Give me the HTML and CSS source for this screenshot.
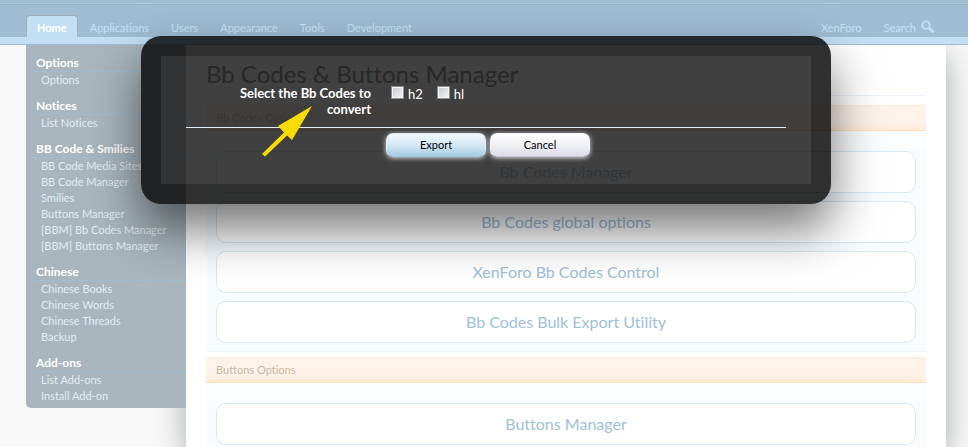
FILE: index.html
```html
<!DOCTYPE html>
<html lang="en">
<head>
<meta charset="utf-8">
<title>Bb Codes &amp; Buttons Manager</title>
<link rel="stylesheet" href="styles.css">
</head>
<body>
<div class="page">
  <header class="header">
    <nav class="tabs">
      <a class="tab active" href="#">Home</a>
      <a class="tab" href="#">Applications</a>
      <a class="tab" href="#">Users</a>
      <a class="tab" href="#">Appearance</a>
      <a class="tab" href="#">Tools</a>
      <a class="tab" href="#">Development</a>
      <a class="tab push" href="#">XenForo</a>
      <a class="tab search" href="#">Search
        <svg width="14" height="14" viewBox="0 0 14 14" aria-hidden="true"><circle cx="5" cy="5" r="3.7" fill="none" stroke="currentColor" stroke-width="1.7"/><path d="M8 8l4.500 4.300" stroke="currentColor" stroke-width="2.500" fill="none"/></svg>
      </a>
    </nav>
  </header>
  <div class="body">
    <aside class="sidebar">
      <section class="group">
        <h2>Options</h2>
        <ul><li><a href="#">Options</a></li></ul>
      </section>
      <section class="group">
        <h2>Notices</h2>
        <ul><li><a href="#">List Notices</a></li></ul>
      </section>
      <section class="group">
        <h2>BB Code &amp; Smilies</h2>
        <ul>
          <li><a href="#">BB Code Media Sites</a></li>
          <li><a href="#">BB Code Manager</a></li>
          <li><a href="#">Smilies</a></li>
          <li><a href="#">Buttons Manager</a></li>
          <li><a href="#">[BBM] Bb Codes Manager</a></li>
          <li><a href="#">[BBM] Buttons Manager</a></li>
        </ul>
      </section>
      <section class="group">
        <h2>Chinese</h2>
        <ul>
          <li><a href="#">Chinese Books</a></li>
          <li><a href="#">Chinese Words</a></li>
          <li><a href="#">Chinese Threads</a></li>
          <li><a href="#">Backup</a></li>
        </ul>
      </section>
      <section class="group">
        <h2>Add-ons</h2>
        <ul>
          <li><a href="#">List Add-ons</a></li>
          <li><a href="#">Install Add-on</a></li>
        </ul>
      </section>
    </aside>
    <main class="content">
      <h1>Bb Codes &amp; Buttons Manager</h1>
      <section class="panel">
        <h2>Bb Codes Options</h2>
        <div class="links">
          <a href="#">Bb Codes Manager</a>
          <a href="#">Bb Codes global options</a>
          <a href="#">XenForo Bb Codes Control</a>
          <a href="#">Bb Codes Bulk Export Utility</a>
        </div>
      </section>
      <section class="panel">
        <h2>Buttons Options</h2>
        <div class="links">
          <a href="#">Buttons Manager</a>
        </div>
      </section>
    </main>
  </div>
  <form class="overlay" role="dialog" aria-labelledby="convert">
    <div class="dialog">
      <div class="row">
        <div class="caption" id="convert">Select the Bb Codes to convert</div>
        <div class="choices">
          <label><input type="checkbox"> h2</label>
          <label><input type="checkbox"> hl</label>
        </div>
      </div>
      <div class="actions">
        <button type="button" class="primary">Export</button>
        <button type="button">Cancel</button>
      </div>
    </div>
  </form>
  <svg class="arrow" width="52" height="52" viewBox="0 0 52 52" aria-hidden="true"><path d="M51 1L17 21L23 27.500L1 49L4 51.500L26 30.500L31 35Z" fill="#f8dc00"/></svg>
</div>
</body>
</html>
```
FILE: styles.css
```css
* { box-sizing: border-box; }
body {
  margin: 0;
  font-family: "Trebuchet MS", Lato, sans-serif;
  font-size: 11px;
  font-variant-ligatures: none;
  background: #f9f9f9;
}
h1, h2, ul { margin: 0; padding: 0; font-weight: normal; }
ul { list-style: none; }
a { color: inherit; text-decoration: none; }

.page {
  position: relative;
  display: flex;
  flex-direction: column;
  min-height: 100vh;
  overflow: hidden;
}

.header {
  position: relative;
  z-index: 2;
  padding: 12px 22px 0 26px;
  background: linear-gradient(#a0bdd4 3px, #a3cdec 3px, #a3cdec 4px, #a4b0b8 4px, #a4b0b8 5px, #a0bdd4 5px);
  border-bottom: 1px solid #9fbdd2;
}
.tabs {
  display: flex;
  align-items: flex-end;
  height: 25px;
}
.header::after {
  content: "";
  display: block;
  height: 7px;
  margin: 0 -22px 0 -26px;
  background: #c2dff4;
}
.tab {
  height: 22px;
  padding: 0 11px;
  line-height: 26px;
  color: #c5e2f7;
}
.tab.active {
  margin-right: 1px;
  padding: 0 10px;
  border: 1px solid #9cacb8;
  border-bottom: 0;
  border-radius: 4px 4px 0 0;
  background: #c2dff4;
  color: #fff;
  font-weight: bold;
  line-height: 24px;
}
.push { margin-left: auto; }
.search { display: flex; gap: 5px; }
.search svg { margin-top: 5px; }

.body {
  flex: 1;
  display: flex;
  align-items: flex-start;
  padding: 0 22px 0 26px;
}
.sidebar {
  position: relative;
  z-index: 1;
  flex: 0 0 160px;
  padding: 9px 0 4px 5px;
  border-bottom-left-radius: 5px;
  background: #a9b6be;
}
.group + .group { margin-top: 9px; }
.group h2 {
  padding-left: 5px;
  border-bottom: 1px solid #9fbdd2;
  color: #fff;
  font-size: 12px;
  font-weight: bold;
  line-height: 17px;
}
.group li {
  padding-left: 10px;
  color: #e3ecf2;
  line-height: 16px;
  white-space: nowrap;
}

.content {
  flex: 1;
  align-self: stretch;
  padding: 14px 20px 0;
  background: #fff;
  box-shadow: 0 10px 30px rgba(0, 20, 40, .35);
}
.content h1 {
  height: 37px;
  margin-bottom: 9px;
  border-bottom: 1px solid #edf5fc;
  color: #737373;
  font-size: 24px;
  line-height: 30px;
}
.panel + .panel { margin-top: 5px; }
.panel h2 {
  padding-left: 10px;
  border-top: 1px solid #fdebd9;
  border-bottom: 1px solid #fddfb9;
  background: linear-gradient(#fef3eb 60%, #feecd9);
  color: #c9b8a0;
  font-size: 11px;
  line-height: 24px;
}
.links {
  display: grid;
  gap: 8px;
  padding: 20px 10px 8px;
  border-bottom: 1px solid #edf5fa;
  background: linear-gradient(#fcfdff 18px, #f8fcff 18px);
}
.links a {
  border: 1px solid #d9e8f3;
  border-radius: 10px;
  background: #fff;
  color: #a0c0d9;
  font-size: 16px;
  line-height: 40px;
  text-align: center;
}
.panel:last-child .links { border-bottom: 0; padding-bottom: 3px; }

.overlay {
  position: absolute;
  z-index: 3;
  top: 36px;
  left: 141px;
  right: 137px;
  padding: 20px;
  border-radius: 20px;
  background: rgba(0, 0, 0, .81);
  box-shadow: 0 25px 50px rgba(0, 0, 0, .55);
}
.dialog {
  padding: 29px 25px 27px;
  background: rgba(255, 255, 255, .08);
  color: #fff;
  font-size: 13px;
}
.row {
  display: flex;
  gap: 20px;
  height: 43px;
  border-bottom: 1px solid #e0effb;
}
.caption {
  flex: 0 0 185px;
  padding-left: 35px;
  font-weight: bold;
  line-height: 16px;
  text-align: right;
}
.choices { display: flex; gap: 14px; }
.choices label {
  display: flex;
  align-items: flex-start;
  gap: 4px;
  line-height: 18px;
}
.choices input {
  appearance: none;
  width: 13px;
  height: 13px;
  margin: 1px 0 0;
  border: 1px solid #8e8f8f;
  background: linear-gradient(135deg, #c3c7cd, #f6f6f6);
  box-shadow: inset 0 0 0 1px #f4f4f4;
}
.actions {
  display: flex;
  justify-content: center;
  gap: 4px;
  margin-left: 4px;
  padding-top: 5px;
}
.actions button {
  width: 100px;
  height: 24px;
  padding: 0 0 2px;
  border: 1px solid #f0f0fa;
  border-bottom-color: #c5c5d5;
  border-radius: 7px;
  background: linear-gradient(#fff, #f0f0f6 50%, #dcdcea);
  box-shadow: 0 1px 5px #e0e0ea;
  color: #000;
  font: inherit;
  font-size: 11px;
}
.actions .primary {
  border-color: #dcecf6;
  border-bottom-color: #a4c8e0;
  background: linear-gradient(#f0f8fc, #d4e8f4 50%, #a4cce4);
}
.arrow {
  position: absolute;
  z-index: 4;
  top: 105px;
  left: 261px;
}
```
